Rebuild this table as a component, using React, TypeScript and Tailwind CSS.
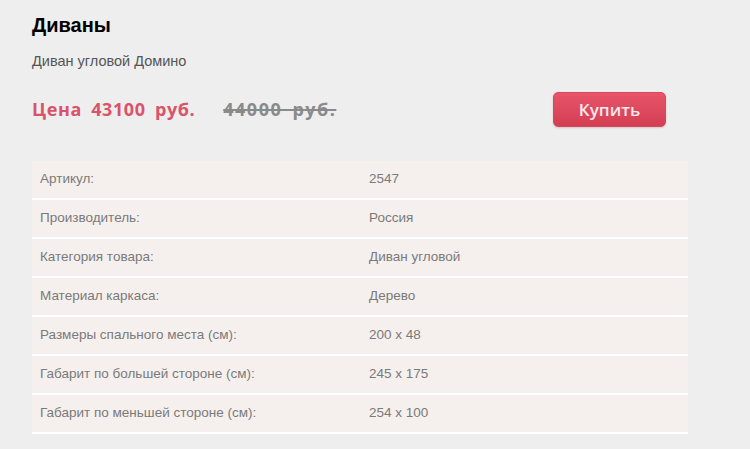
const specs: [string, string][] = [
  ['Артикул:', '2547'],
  ['Производитель:', 'Россия'],
  ['Категория товара:', 'Диван угловой'],
  ['Материал каркаса:', 'Дерево'],
  ['Размеры спального места (см):', '200 x 48'],
  ['Габарит по большей стороне (см):', '245 x 175'],
  ['Габарит по меньшей стороне (см):', '254 x 100'],
];

export default function App() {
  return (
    <div className="min-h-[449px] w-[750px] bg-[#eeeeee] pl-8 pt-[12px] font-['Liberation_Sans',sans-serif]">
      <h1 className="text-[20px] font-bold leading-[26px] text-black">Диваны</h1>
      <p className="mt-[14px] text-[14.5px] leading-[18px] text-[#555555]">Диван угловой Домино</p>

      <div className="mt-[22px] flex w-[656px] items-center">
        <div className="flex items-center font-['Open_Sans',sans-serif] text-[18px] font-bold [word-spacing:4px]">
          <span className="tracking-[0.6px] text-[#d9536a]">Цена 43100 руб.</span>
          <span className="ml-[21px] px-[7px] tracking-[1.5px] text-[#8a8a8a] line-through decoration-[#8a8a8a] decoration-[1.5px]">
            44000 руб.
          </span>
        </div>
        <button className="ml-auto mr-[22px] h-[35px] w-[113px] rounded-[5px] border border-[#d9475c] bg-gradient-to-b from-[#e8546a] to-[#d33e53] font-['Open_Sans',sans-serif] text-[17px] font-semibold text-[#fde9ec] shadow-[0_1px_2px_rgba(0,0,0,0.15)]">
          Купить
        </button>
      </div>

      <div className="mt-[34px] w-[656px]">
        {specs.map(([label, value]) => (
          <div
            key={label}
            className="flex h-[39px] items-center border-b-2 border-white bg-[#f5f0ed] text-[13.5px] text-[#7a7a7a]"
          >
            <span className="w-[337px] pl-2">{label}</span>
            <span>{value}</span>
          </div>
        ))}
      </div>
    </div>
  );
}
